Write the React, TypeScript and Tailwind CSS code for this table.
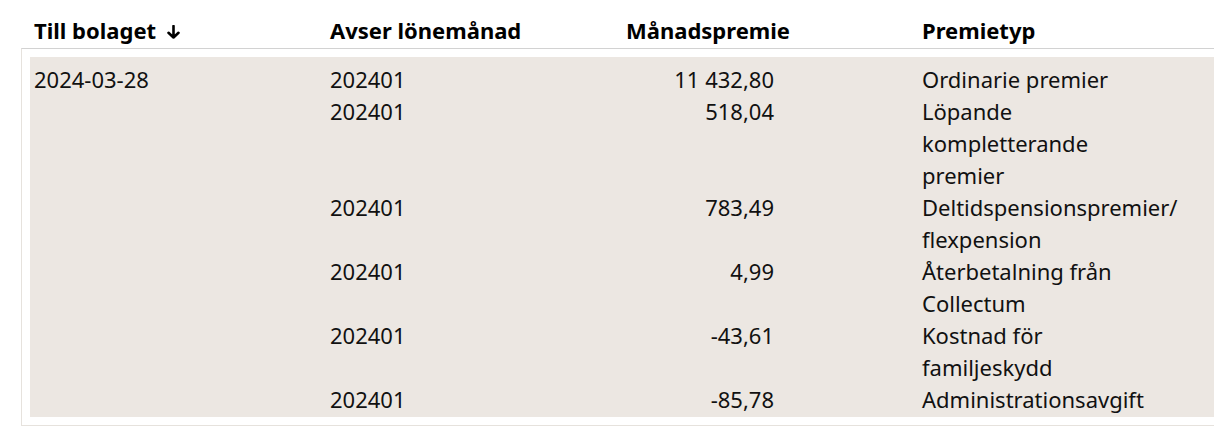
import React from "react";

type Row = {
  date?: string;
  month: string;
  amount: string;
  type: string[];
};

const rows: Row[] = [
  { date: "2024-03-28", month: "202401", amount: "11 432,80", type: ["Ordinarie premier"] },
  { month: "202401", amount: "518,04", type: ["Löpande", "kompletterande", "premier"] },
  { month: "202401", amount: "783,49", type: ["Deltidspensionspremier/", "flexpension"] },
  { month: "202401", amount: "4,99", type: ["Återbetalning från", "Collectum"] },
  { month: "202401", amount: "-43,61", type: ["Kostnad för", "familjeskydd"] },
  { month: "202401", amount: "-85,78", type: ["Administrationsavgift"] },
];

const SortDown = () => (
  <svg width="13" height="14" viewBox="0 0 13 14" className="ml-[11px] mt-[3px]" aria-hidden>
    <path d="M6.5 1V12.5M1.5 7.8L6.5 12.5L11.5 7.8" fill="none" stroke="#000" strokeWidth="2.6" strokeLinecap="round" strokeLinejoin="round" />
  </svg>
);

export default function App() {
  return (
    <div
      className="w-[1214px] h-[435px] overflow-hidden bg-white text-[#111] text-[22px] leading-[32px]"
      style={{ fontFamily: '"Noto Sans", "Open Sans", sans-serif' }}
    >
      <div className="pt-[14px] pl-[21px]">
        <div className="ml-[9px] grid w-[1184px] grid-cols-4 pb-[2px] font-bold text-black">
          <div className="flex items-center px-1">
            Till bolaget
            <SortDown />
          </div>
          <div className="px-1">Avser lönemånad</div>
          <div className="px-1">Månadspremie</div>
          <div className="px-1">Premietyp</div>
        </div>

        <div className="w-[1210px] border-t border-l border-b border-t-[#d2d2d2] border-l-[#e6e2dd] border-b-[#e6e2dd] p-2">
          <div className="w-[1184px] bg-[#ece7e2] pt-[6px] pb-[2px]">
            {rows.map((r, i) => (
              <div key={i} className="grid grid-cols-4">
                <div className="px-1">{r.date ?? ""}</div>
                <div className="px-1">{r.month}</div>
                <div className="pl-1 pr-[144px] text-right">{r.amount}</div>
                <div className="px-1">
                  {r.type.map((t) => (
                    <div key={t}>{t}</div>
                  ))}
                </div>
              </div>
            ))}
          </div>
        </div>
      </div>
    </div>
  );
}
